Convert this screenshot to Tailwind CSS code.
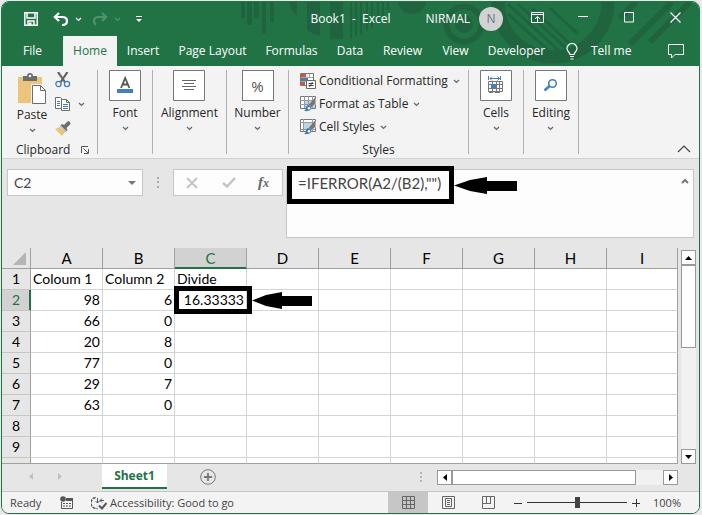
<!DOCTYPE html>
<html lang="en">
<head>
    <meta charset="UTF-8">
    <meta name="viewport" content="width=device-width, initial-scale=1.0">
    <title>Book1 - Excel</title>
    <!-- Tailwind CSS CDN -->
    <script src="https://cdn.jsdelivr.net/npm/@tailwindcss/browser@4"></script>
</head>
<body class="bg-[#e9e9e9] pt-px pl-px pr-[2px] font-['Open_Sans','Noto_Sans',sans-serif] text-[12px] leading-4 text-[#262626]">
    <!-- Shared icons -->
    <svg class="hidden">
        <symbol id="chevron" viewBox="0 0 7 5"><path d="M1 1l2.500 2.500L6 1" fill="none" stroke="currentColor" stroke-width="1.200"/></symbol>
        <symbol id="brush" viewBox="0 0 17 17">
            <path d="M16.500 1v7l-4 4-3-3z" fill="#777"/>
            <path d="M9 9.500c2 .3 3.200 1.600 3 3.500-.3 2.700-4 3.500-8 3 2-.8 1.800-2 2.200-3.800.4-1.600 1.300-2.600 2.800-2.700z" fill="#3d7ebf"/>
            <circle cx="9.500" cy="13" r="1.300" fill="#fff"/>
        </symbol>
    </svg>

    <div class="overflow-hidden rounded-lg border border-[#217346] bg-[#e6e6e6]">
        <!-- Title bar and tabs -->
        <header class="relative bg-[#217346] text-white">
            <svg class="absolute top-0 right-0 h-16 w-[460px] text-[#1f633f]" viewBox="239 2 460 64" fill="currentColor" aria-hidden="true">
                <path d="M241 2h4v16h-4zM247 2h5v23h-5zM254 2h5v16h-5zM262 2h4v32h-4zM270 2h4v20h-4z"/>
                <path d="M289 2h8v14c-4-4-7-9-8-14zM307 2h13v34c-5-1-9-3-13-6zM330 2h13v37h-13z"/>
                <path d="M350 2h2v36h-2zM355 2h2v34h-2zM360 2h2v33h-2zM366 2h2v29h-2zM371 2h2v26h-2zM377 2h2v20h-2zM382 2h2v14h-2zM387 2h2v8h-2z"/>
                <path d="M398 2h28c-1 7-7 12-14 12s-13-5-14-12z"/>
                <circle cx="464" cy="24" r="17.500" fill="none" stroke="currentColor" stroke-width="6"/>
                <circle cx="464" cy="24" r="9"/>
                <circle cx="553" cy="2" r="55" fill="none" stroke="currentColor" stroke-width="13"/>
                <path d="M508 4l50 46M508 14l40 36M518 4l50 46M532 8l38 36M550 8l28 26" fill="none" stroke="currentColor" stroke-width="3"/>
                <path d="M630 44l42-42M650 42l40-40M668 24l22-22M620 18l16-16" fill="none" stroke="currentColor" stroke-width="6"/>
            </svg>
            <div class="relative flex h-[34px] items-center">
                <div class="flex items-center pl-[22px]">
                    <button aria-label="Save"><svg class="size-[14px]" viewBox="0 0 14 14"><path d="M.8.8h12.400v12.400H.8zM3 1v5h8V1M4 13V9h6v4" fill="none" stroke="#fff" stroke-width="1.500"/><path d="M5 10.500h2.500V13H5z" fill="#fff"/></svg></button>
                    <button class="ml-[15px]" aria-label="Undo"><svg class="h-[14px] w-4" viewBox="0 0 16 14"><path d="M6 1L1.800 5 6 9M2 5h7c3 0 5 1.500 5 4s-2 4-5 4" fill="none" stroke="#fff" stroke-width="2.200"/></svg></button>
                    <svg class="ml-[6px] h-[5px] w-[7px]"><use href="#chevron"/></svg>
                    <button class="ml-[10px] text-[#51916c]" aria-label="Redo"><svg class="h-[14px] w-4" viewBox="0 0 16 14"><path d="M10 1l4.200 4L10 9M14 5H7C4 5 2 6.500 2 9s1 3 2 3.500" fill="none" stroke="currentColor" stroke-width="2.200"/></svg></button>
                    <svg class="ml-[6px] h-[5px] w-[7px] text-[#51916c]"><use href="#chevron"/></svg>
                    <button class="ml-[15px]" aria-label="Customize toolbar"><svg class="h-[7px] w-[6px]" viewBox="0 0 6 7" fill="#fff"><path d="M0 0h6v1H0zM0 3h6L3 6z"/></svg></button>
                </div>
                <h1 class="mr-[35px] flex-1 text-right whitespace-pre">Book1  -  Excel</h1>
                <span>NIRMAL</span>
                <span class="ml-[9px] flex size-6 items-center justify-center rounded-full bg-[#d2d2d2] text-[12px] text-[#68738a]">N</span>
                <div class="ml-[11px] flex">
                    <button class="flex w-[46px] justify-center pb-1" aria-label="Ribbon display options"><svg class="h-[11px] w-[13px]" viewBox="0 0 13 11"><path d="M.5.5h12v10H.5zM0 2.500h13M6.500 10V5M4 7l2.500-2.500L9 7" fill="none" stroke="#fff"/></svg></button>
                    <button class="flex w-[46px] justify-center pb-1" aria-label="Minimize"><svg class="h-[11px] w-[10px]" viewBox="0 0 10 11"><path d="M0 4.500h10" stroke="#fff"/></svg></button>
                    <button class="flex w-[46px] justify-center pb-1" aria-label="Maximize"><svg class="h-[11px] w-[10px]" viewBox="0 0 10 11"><path d="M.5.500h9v9.500h-9z" fill="none" stroke="#fff"/></svg></button>
                    <button class="flex w-[47px] justify-center pb-1" aria-label="Close"><svg class="h-[11px] w-[11px]" viewBox="0 0 11 11"><path d="M.5.500l10 10M10.500.500l-10 10" fill="none" stroke="#fff" stroke-width="1.200"/></svg></button>
                </div>
            </div>
            <nav class="relative flex h-[30px]">
                <button class="w-[61px]">File</button>
                <button class="w-[54px] bg-[#f3f3f3] text-[#217346]">Home</button>
                <button class="w-[52px]">Insert</button>
                <button class="w-[87px]">Page Layout</button>
                <button class="w-[71px]">Formulas</button>
                <button class="w-[46px]">Data</button>
                <button class="w-[59px]">Review</button>
                <button class="w-[47px]">View</button>
                <button class="w-[75px]">Developer</button>
                <button class="ml-[12px] flex items-center gap-[13px]">
                    <svg class="h-[17px] w-3" viewBox="0 0 12 17"><path d="M4 11.500C4 9.500 1 8.500 1 5.500a5 5 0 0 1 10 0c0 3-3 4-3 6zM4 13.500h4M4.500 16h3" fill="none" stroke="#fff" stroke-width="1.200"/></svg>
                    Tell me
                </button>
                <button class="mr-[15px] ml-auto" aria-label="Comments"><svg class="h-[15px] w-4" viewBox="0 0 16 15"><path d="M.5.500h15v10H7l-3.500 3.500v-3.500h-3z" fill="none" stroke="#fff"/></svg></button>
            </nav>
        </header>

        <!-- Ribbon -->
        <section class="flex h-[93px] border-b border-[#d2d2d2] bg-[#f3f3f3] pt-1 pb-1">
            <div class="flex w-24 flex-col border-r border-[#b1b1b1]">
                <div class="flex flex-1">
                    <button class="ml-[13px] flex w-[34px] flex-col items-center pt-[3px]">
                        <svg class="h-8 w-[30px] shrink-0" viewBox="0 0 30 32">
                            <path d="M1 4h24v26H1z" fill="#ecc57c"/>
                            <path d="M6 3h4a3 3 0 0 1 6 0h4v5H6z" fill="#6d6d6d"/><circle cx="13" cy="3" r="1.300" fill="#f3f3f3"/>
                            <path d="M14 11h10l6 6v15H14z" fill="#f3f3f3"/>
                            <path d="M15.500 12.500h8l5 5v13h-13zM23.500 12.500v5h5" fill="#fff" stroke="#6d6d6d"/>
                        </svg>
                        <span class="mt-[2px]">Paste</span>
                        <svg class="mt-[5px] h-[5px] w-[7px] text-[#666]"><use href="#chevron"/></svg>
                    </button>
                    <div class="ml-[6px] flex flex-col gap-2 pt-[2px]">
                        <button aria-label="Cut"><svg class="size-4" viewBox="0 0 16 16"><path d="M3 0l7.500 11M12.500 0L5 11" fill="none" stroke="#636363" stroke-width="2.200"/><circle cx="3.500" cy="12" r="2.600" fill="#f3f3f3" stroke="#3d7ebf" stroke-width="1.300"/><circle cx="12" cy="12" r="2.600" fill="#f3f3f3" stroke="#3d7ebf" stroke-width="1.300"/></svg></button>
                        <button class="flex items-center gap-[7px]" aria-label="Copy">
                            <svg class="size-4" viewBox="0 0 16 16"><path d="M.5 1.500h5l3 3v8h-8z" fill="#fff" stroke="#6d6d6d"/><path d="M2 5.500h3M2 7.500h3M2 9.500h3" stroke="#3d7ebf"/><path d="M6.500 3.500h5l3 3v8h-8zM11.500 3.500v3h3" fill="#fff" stroke="#6d6d6d"/><path d="M8 8.500h5M8 10.500h5M8 12.500h5" stroke="#3d7ebf"/></svg>
                            <svg class="h-[5px] w-[7px] text-[#666]"><use href="#chevron"/></svg>
                        </button>
                        <button aria-label="Format painter"><svg class="size-4" viewBox="0 0 16 16"><path d="M0 9l5-2 5 5-3 4z" fill="#ecc57c"/><path d="M5 6l2-2 2 1 4-4 2 1 .5 2-4 4 1 2-2 2z" fill="#6d6d6d"/><path d="M5.500 5.800l6 6" stroke="#f3f3f3"/></svg></button>
                    </div>
                </div>
                <div class="flex h-2 items-center pl-[14px]">Clipboard
                    <button class="mr-2 ml-auto" aria-label="Clipboard settings"><svg class="size-2" viewBox="0 0 8 8"><path d="M.5 7V.5H7M2.500 2.500l4.500 4.500M7.500 3v4.500H3" fill="none" stroke="#555"/></svg></button>
                </div>
            </div>
            <div class="flex w-[55px] justify-center border-r border-[#b1b1b1]">
                <button class="flex flex-col items-center">
                    <svg class="h-[31px] w-8" viewBox="0 0 32 31"><path d="M.5.500h31v30H.5z" fill="#fff" stroke="#777"/><path d="M12 18l4.200-10 4.200 10M13.500 14.500h5.500" fill="none" stroke="#555" stroke-width="1.800"/><path d="M8 19h16v4H8z" fill="#457fb9"/></svg>
                    <span class="mt-1">Font</span>
                    <svg class="mt-[5px] h-[5px] w-[7px] text-[#666]"><use href="#chevron"/></svg>
                </button>
            </div>
            <div class="flex w-[74px] justify-center border-r border-[#b1b1b1]">
                <button class="flex flex-col items-center">
                    <svg class="h-[31px] w-8" viewBox="0 0 32 31"><path d="M.5.500h31v30H.5z" fill="#fff" stroke="#777"/><path d="M9 10.500h14M11 13.500h10M9 16.500h14M11 19.500h10" stroke="#666"/></svg>
                    <span class="mt-1">Alignment</span>
                    <svg class="mt-[5px] h-[5px] w-[7px] text-[#666]"><use href="#chevron"/></svg>
                </button>
            </div>
            <div class="flex w-[62px] justify-center border-r border-[#b1b1b1]">
                <button class="flex flex-col items-center">
                    <span class="flex h-[31px] w-8 items-center justify-center border border-[#777] bg-white text-[15px] text-[#555]">%</span>
                    <span class="mt-1">Number</span>
                    <svg class="mt-[5px] h-[5px] w-[7px] text-[#666]"><use href="#chevron"/></svg>
                </button>
            </div>
            <div class="flex w-[180px] flex-col border-r border-[#b1b1b1]">
                <div class="flex flex-1 flex-col gap-[7px] pt-[3px] pl-[11px]">
                    <button class="flex items-center gap-[3px] whitespace-nowrap">
                        <svg class="size-4" viewBox="0 0 16 16"><path d="M.5.500h13v12H.5z" fill="#fff" stroke="#777"/><path d="M1 1h5v3H1zM1 9h4v3H1z" fill="#d9532c"/><path d="M1 5h7v3H1z" fill="#457fb9"/><path d="M1 4.500h12M1 8.500h12M9.500 1v4" stroke="#aaa"/><path d="M6.500 7.500h9v8h-9z" fill="#fff" stroke="#666"/><path d="M8.500 10.500h5M8.500 12.500h5M12.500 9l-3 5" stroke="#444"/></svg>
                        Conditional Formatting
                        <svg class="ml-[2px] h-[5px] w-[7px] text-[#666]"><use href="#chevron"/></svg>
                    </button>
                    <button class="flex items-center gap-[3px]">
                        <svg class="size-4" viewBox="0 0 16 16"><path d="M.5.500h15v12H.5z" fill="#fff" stroke="#777"/><path d="M4 4h11v8H4z" fill="#bdd3ea"/><path d="M0 4.500h15M0 8.500h15M4.500 0v12M8.500 0v12M12.500 0v12" stroke="#999"/><path d="M16 2v6l-5 4 1-5z" fill="#f3f3f3"/><use href="#brush" width="16" height="16"/></svg>
                        Format as Table
                        <svg class="ml-[2px] h-[5px] w-[7px] text-[#666]"><use href="#chevron"/></svg>
                    </button>
                    <button class="flex items-center gap-[3px]">
                        <svg class="size-4" viewBox="0 0 16 16"><path d="M.5.500h15v12H.5z" fill="#fff" stroke="#777"/><path d="M3 4h10v6H3z" fill="#bdd3ea"/><path d="M0 3.500h15M0 10.500h15M3.500 0v12M12.500 0v12" stroke="#999"/><path d="M16 2v6l-5 4 1-5z" fill="#f3f3f3"/><use href="#brush" width="16" height="16"/></svg>
                        Cell Styles
                        <svg class="ml-[2px] h-[5px] w-[7px] text-[#666]"><use href="#chevron"/></svg>
                    </button>
                </div>
                <div class="flex h-2 items-center justify-center">Styles</div>
            </div>
            <div class="flex w-[55px] justify-center border-r border-[#b1b1b1]">
                <button class="flex flex-col items-center">
                    <svg class="h-[31px] w-8" viewBox="0 0 32 31"><path d="M.5.500h31v30H.5z" fill="#fff" stroke="#777"/><path d="M8.500 6v4M20.500 6v4M10 8.500h10M12 6.500l-2 2 2 2M17.500 6.500l2 2-2 2" fill="none" stroke="#457fb9"/><path d="M8.500 11.500h14v10h-14zM8.500 14.500h14M8.500 18.500h14M12.500 11.500v10M16.500 11.500v10M19.500 11.500v10" fill="none" stroke="#777"/><path d="M11 14h5v4h-5z" fill="#457fb9"/><path d="M9 22.500h4l1-1 1 1h5" stroke="#777" fill="none"/></svg>
                    <span class="mt-1">Cells</span>
                    <svg class="mt-[5px] h-[5px] w-[7px] text-[#666]"><use href="#chevron"/></svg>
                </button>
            </div>
            <div class="flex w-[55px] justify-center border-r border-[#b1b1b1]">
                <button class="flex flex-col items-center">
                    <svg class="h-[31px] w-8" viewBox="0 0 32 31"><path d="M.5.500h31v30H.5z" fill="#fff" stroke="#777"/><circle cx="17.500" cy="13.500" r="3.800" fill="none" stroke="#457fb9" stroke-width="1.600"/><path d="M14.500 16l-5 4.500" stroke="#457fb9" stroke-width="2.500"/></svg>
                    <span class="mt-1">Editing</span>
                    <svg class="mt-[5px] h-[5px] w-[7px] text-[#666]"><use href="#chevron"/></svg>
                </button>
            </div>
            <button class="mr-[8px] mb-px ml-auto self-end" aria-label="Collapse ribbon"><svg class="h-2 w-[14px]" viewBox="0 0 14 8"><path d="M1 7l6-6 6 6" fill="none" stroke="#444" stroke-width="1.200"/></svg></button>
        </section>

        <!-- Formula bar -->
        <section class="flex h-[89px] items-start pt-[10px] pr-[5px] pl-[5px] text-[#444]">
            <div class="flex h-[27px] w-[136px] items-center border border-[#c6c6c6] bg-[#fdfdfd]">
                <input class="w-full min-w-0 pl-[6px] font-['Lato',sans-serif] text-[14px]" aria-label="Name box" value="C2">
                <button class="px-[6px]" aria-label="Show names"><svg class="h-1 w-2" viewBox="0 0 8 4"><path d="M0 0h8L4 4z" fill="#777"/></svg></button>
            </div>
            <svg class="mt-2 ml-[14px] h-[11px] w-[2px]" viewBox="0 0 2 11" fill="#aaa"><path d="M0 0h2v2H0zM0 4h2v2H0zM0 9h2v2H0z"/></svg>
            <div class="ml-[14px] flex h-[27px] w-[110px] items-center border border-[#c6c6c6] bg-[#fdfdfd] pl-3">
                <button aria-label="Cancel"><svg class="size-3" viewBox="0 0 12 12"><path d="M1 1l10 10M11 1L1 11" stroke="#c3c3c3" stroke-width="1.800"/></svg></button>
                <button class="ml-[24px]" aria-label="Enter"><svg class="h-[11px] w-[14px]" viewBox="0 0 14 11"><path d="M1 6l4 3.500L13 1" fill="none" stroke="#c3c3c3" stroke-width="2.400"/></svg></button>
                <button class="ml-[22px] flex items-baseline font-['Liberation_Serif',serif] text-[15px] font-bold text-[#666] italic" aria-label="Insert function">f<span class="text-[12px]">x</span></button>
            </div>
            <div class="relative ml-[3px] flex h-[69px] flex-1 items-start border border-[#c6c6c6] bg-[#fdfdfd]">
                <textarea class="h-full flex-1 resize-none pt-[3px] pl-[11px] font-['Lato',sans-serif] text-[15px] leading-5" aria-label="Formula">=IFERROR(A2/(B2),"")</textarea>
                <button class="mt-[8px] mr-1" aria-label="Collapse formula bar"><svg class="h-[6px] w-2" viewBox="0 0 8 6"><path d="M1 5l3-3 3 3" fill="none" stroke="#777" stroke-width="2"/></svg></button>
                <!-- Callout around the formula -->
                <div class="pointer-events-none absolute top-[-4px] left-0 flex h-[38px] items-center">
                    <div class="h-full w-[167px] border-[5px] border-black"></div>
                    <svg class="h-[17px] w-[63px]" viewBox="0 0 63 17"><path d="M0 8.500L16 3l17-3v4h30v10H33v3l-17-3z"/></svg>
                </div>
            </div>
        </section>

        <!-- Sheet -->
        <section class="flex gap-[3px] pr-[3px]">
            <table class="flex-1 table-fixed border-separate border-spacing-0 bg-white font-['Lato',sans-serif] text-[14px] leading-5 text-black">
                <thead class="bg-[#e6e6e6] text-[15px]">
                    <tr class="h-[21px] [&>th]:border-r [&>th]:border-b [&>th]:border-[#a0a0a0] [&>th]:p-0 [&>th]:font-normal">
                        <th class="w-[29px]" aria-label="Select all"><svg class="ml-auto mr-1 size-[13px]" viewBox="0 0 13 13"><path d="M13 0v13H0z" fill="#b5b5b5"/></svg></th>
                        <th class="w-[72px]">A</th>
                        <th class="w-[72px]">B</th>
                        <th class="w-[72px] border-b-[#217346]! bg-[#d2d2d2] text-[#217346] shadow-[inset_0_-1px_#217346]">C</th>
                        <th class="w-[72px]">D</th>
                        <th class="w-[72px]">E</th>
                        <th class="w-[72px]">F</th>
                        <th class="w-[72px]">G</th>
                        <th class="w-[72px]">H</th>
                        <th>I</th>
                    </tr>
                </thead>
                <tbody id="rows"></tbody>
            </table>
            <div class="mt-[2px] flex w-[15px] flex-col bg-[#f1f1f1]">
                <button class="flex h-[15px] items-center justify-center border border-[#999] bg-white" aria-label="Scroll up"><svg class="h-1 w-[7px]" viewBox="0 0 7 4"><path d="M0 4h7L3.500 0z"/></svg></button>
                <div class="h-[83px] border border-[#999] bg-white"></div>
                <button class="mt-auto flex h-[15px] items-center justify-center border border-[#999] bg-white" aria-label="Scroll down"><svg class="h-1 w-[7px]" viewBox="0 0 7 4"><path d="M0 0h7L3.500 4z"/></svg></button>
            </div>
        </section>

        <!-- Sheet tabs -->
        <section class="flex h-7 items-start border-b border-[#c6c6c6]">
            <div class="flex items-center gap-[25px] pt-[9px] pl-[27px]">
                <svg class="h-[7px] w-1" viewBox="0 0 4 7"><path d="M4 0v7L0 3.500z" fill="#c0c0c0"/></svg>
                <svg class="h-[7px] w-1" viewBox="0 0 4 7"><path d="M0 0v7l4-3.500z" fill="#c0c0c0"/></svg>
            </div>
            <button class="ml-[40px] h-[25px] w-[65px] border-b-2 border-[#217346] bg-white font-bold text-[#217346]">Sheet1</button>
            <button class="mt-[5px] ml-[33px]" aria-label="New sheet"><svg class="size-4" viewBox="0 0 16 16" fill="none" stroke="#777"><circle cx="8" cy="8" r="7.300"/><path d="M8 4v8M4 8h8" stroke-width="1.800"/></svg></button>
            <svg class="mt-2 mr-[15px] ml-auto h-[10px] w-[2px]" viewBox="0 0 2 10" fill="#b5b5b5"><path d="M0 0h2v2H0zM0 4h2v2H0zM0 8h2v2H0z"/></svg>
            <div class="mt-[6px] mr-[21px] flex h-[15px] w-[241px] bg-[#f1f1f1]">
                <button class="flex w-[15px] items-center justify-center border border-[#999] bg-white" aria-label="Scroll left"><svg class="h-[7px] w-1" viewBox="0 0 4 7"><path d="M4 0v7L0 3.500z"/></svg></button>
                <div class="w-[184px] border border-[#999] bg-white"></div>
                <button class="ml-auto flex w-[15px] items-center justify-center border border-[#999] bg-white" aria-label="Scroll right"><svg class="h-[7px] w-1" viewBox="0 0 4 7"><path d="M0 0v7l4-3.500z"/></svg></button>
            </div>
        </section>

        <!-- Status bar -->
        <footer class="flex h-[21px] items-center bg-[#f3f3f3] pl-2 text-[11px] text-[#444]">
            <span class="w-[50px]">Ready</span>
            <svg class="size-[13px]" viewBox="0 0 13 13"><path d="M1.500 6v6.500h11v-10H6" fill="none" stroke="#555"/><path d="M6 2h7v3H6z" fill="#555"/><circle cx="3" cy="3" r="2.800" fill="#555"/><path d="M3 7.500h2M6 7.500h2M9 7.500h2M3 10h2M6 10h2M9 10h2" stroke="#555" stroke-width="1.200"/></svg>
            <svg class="ml-[18px] h-[14px] w-4" viewBox="0 0 16 14" fill="none" stroke="#555"><path d="M4.500 1.500a5.500 5.500 0 0 0 2 11" stroke-width="1.500" stroke-dasharray="3 1"/><path d="M6.500 2v5M4.500 5l2 2 2-2M9 4.500h4M11 2.500l-2 2 2 2"/><path d="M8 9.500l3 3L15.500 7" stroke-width="2"/></svg>
            <span class="ml-[3px]">Accessibility: Good to go</span>
            <div class="ml-auto flex h-full">
                <button class="flex w-10 items-center justify-center bg-[#c6c6c6]" aria-label="Normal view"><svg class="size-[13px]" viewBox="0 0 13 13"><path d="M.5.500h12v12H.5zM4.500 0v13M8.500 0v13M0 4.500h13M0 8.500h13" fill="none" stroke="#666"/></svg></button>
                <button class="flex w-10 items-center justify-center" aria-label="Page layout view"><svg class="size-[13px]" viewBox="0 0 13 13"><path d="M.5.500h12v12H.5zM3.500 2.500h6v8h-6zM5 4.500h3M5 6.500h3M5 8.500h3" fill="none" stroke="#666"/></svg></button>
                <button class="flex w-10 items-center justify-center" aria-label="Page break view"><svg class="size-[13px]" viewBox="0 0 13 13"><path d="M.5.500h12v12H.5zM4.500 0v7.500M8.500 0v7.500M0 7.500h9" fill="none" stroke="#666"/></svg></button>
            </div>
            <button class="ml-[6px]" aria-label="Zoom out"><svg class="size-2" viewBox="0 0 8 8"><path d="M0 4.500h8" stroke="#333"/></svg></button>
            <input type="range" value="50" aria-label="Zoom" class="ml-[5px] h-[11px] w-[100px] appearance-none bg-[linear-gradient(#333,#333)] bg-[length:100%_1px] bg-center bg-no-repeat [&::-webkit-slider-thumb]:h-[11px] [&::-webkit-slider-thumb]:w-[5px] [&::-webkit-slider-thumb]:appearance-none [&::-webkit-slider-thumb]:bg-[#444]">
            <button class="ml-[5px]" aria-label="Zoom in"><svg class="size-2" viewBox="0 0 8 8"><path d="M0 4.500h8M4.500 0v8" stroke="#333"/></svg></button>
            <span class="mr-[18px] ml-[13px]">100%</span>
        </footer>
    </div>

    <script>
        const data = [
            ['Coloum 1', 'Column 2', 'Divide'],
            ['98', '6', '16.33333'],
            ['66', '0'],
            ['20', '8'],
            ['77', '0'],
            ['29', '7'],
            ['63', '0'],
            [],
            []
        ];
        const COLUMNS = 9;
        const body = document.getElementById('rows');

        // Box and arrow drawn over the selected cell
        const callout = `
            <div class="pointer-events-none absolute top-[-4px] left-[-1px] z-10 flex h-[28px] items-center">
                <div class="h-full w-[78px] shrink-0 border-[5px] border-black"></div>
                <svg class="h-[17px] w-[60px] shrink-0" viewBox="0 0 60 17"><path d="M0 8.500L14 3l16-3v4h30v10H30v3l-16-3z"/></svg>
            </div>`;

        data.forEach((values, r) => {
            const selected = r === 1;
            let html = `<th class="border-r border-b p-0 font-normal ${selected ? 'border-r-[#217346] border-b-[#c6c6c6] bg-[#d2d2d2] text-[#217346] shadow-[inset_-1px_0_#217346]' : 'border-r-[#a0a0a0] border-b-[#c6c6c6] bg-[#e6e6e6]'}">${r + 1}</th>`;
            for (let c = 0; c < COLUMNS; c++) {
                const align = r === 0 ? 'text-left' : 'text-right';
                const edge = c === COLUMNS - 1 ? 'border-r-[#a0a0a0]' : 'border-r-[#d4d4d4]';
                html += `<td class="relative border-r border-b border-b-[#d4d4d4] px-[2px] py-0 whitespace-nowrap ${align} ${edge}">${values[c] || ''}${selected && c === 2 ? callout : ''}</td>`;
            }
            const row = document.createElement('tr');
            row.className = 'h-[21px]';
            row.innerHTML = html;
            body.appendChild(row);
        });

        // Top edge of the next row, cut off by the tab strip
        const last = document.createElement('tr');
        last.className = 'h-[6px]';
        last.innerHTML = '<td class="border-r border-b border-[#a0a0a0] bg-[#e6e6e6] p-0"></td>' +
            '<td class="border-r border-b border-r-[#d4d4d4] border-b-[#a0a0a0] p-0"></td>'.repeat(COLUMNS - 1) +
            '<td class="border-r border-b border-[#a0a0a0] p-0"></td>';
        body.appendChild(last);
    </script>
</body>
</html>
